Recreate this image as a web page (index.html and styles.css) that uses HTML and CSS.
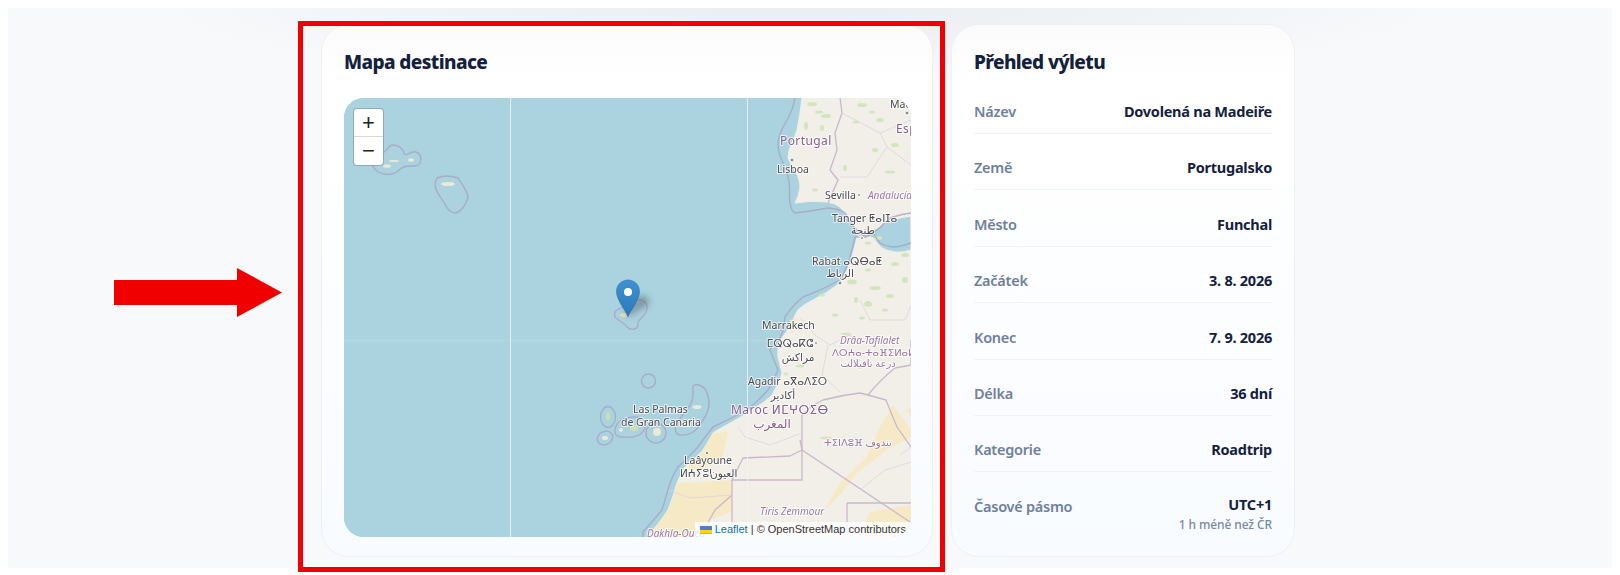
FILE: index.html
```html
<!DOCTYPE html>
<html lang="cs">
<head>
<meta charset="utf-8">
<title>Mapa destinace</title>
<link rel="stylesheet" href="styles.css">
</head>
<body>
<main class="page">
  <div class="layout">
    <section class="card">
      <h2 class="card-title">Mapa destinace</h2>
      <div class="map">
        <svg class="map-art" viewBox="344 98 567 439" width="567" height="439" xmlns="http://www.w3.org/2000/svg" aria-label="Mapa">
          <rect class="sea" x="344" y="98" width="567" height="439"/>
          <path class="land" d="M802,98 Q800,115 797,130 Q795,136 793,140 Q788,150 788,158 Q791,165 795,170 Q800,180 800,187 Q799,196 795,203 Q810,200 827,202 Q835,203 840,207 Q847,216 852,224 Q859,231 866,232 Q872,231 877,228 Q885,222 893,220 Q902,217 911,216 L911,250 Q902,253 895,252 Q887,251 882,248 Q877,243 873,238 Q868,235 863,235 Q859,235 857,237 Q854,250 850,263 Q846,274 840,283 Q827,293 813,300 Q804,304 798,310 Q794,316 792,323 Q787,332 780,340 Q777,349 778,357 Q780,365 782,373 Q778,385 772,395 Q764,403 755,408 Q740,418 723,427 Q717,430 713,433 Q708,442 703,450 Q695,459 685,467 Q680,475 677,483 Q673,497 668,510 Q661,521 653,530 L647,537 L911,537 L911,98 Z"/>

          <g class="sand">
            <path d="M713,433 L728,432 722,458 700,470 685,468 703,450 Z"/>
            <path d="M678,483 L733,480 731,512 710,520 697,537 648,537 653,530 668,510 Z"/>
            <path d="M893,405 L911,430 911,437 887,450 857,473 840,495 823,512 840,483 867,457 880,427 Z"/>
            <path d="M870,512 L911,505 911,537 860,537 Z"/>
            <path d="M905,410 L911,408 911,416 Z"/>
            <path d="M792,333 L797,322 798,318 790,320 Z"/>
          </g>

          <g class="green">
            <ellipse cx="812" cy="104" rx="5" ry="2"/><ellipse cx="819" cy="112" rx="4" ry="1.500"/>
            <ellipse cx="806" cy="126" rx="2" ry="4"/><ellipse cx="826" cy="116" rx="5" ry="2"/>
            <ellipse cx="822" cy="128" rx="2" ry="3"/><ellipse cx="812" cy="140" rx="3" ry="1.500"/>
            <ellipse cx="862" cy="105" rx="5" ry="2"/><ellipse cx="872" cy="112" rx="3" ry="1.500"/>
            <ellipse cx="880" cy="120" rx="4" ry="2"/><ellipse cx="856" cy="122" rx="3" ry="1.500"/>
            <ellipse cx="895" cy="145" rx="4" ry="2"/><ellipse cx="875" cy="150" rx="3" ry="2"/>
            <ellipse cx="815" cy="190" rx="3" ry="1.500"/><ellipse cx="845" cy="168" rx="2" ry="3"/>
            <ellipse cx="890" cy="172" rx="5" ry="1.500"/><ellipse cx="878" cy="238" rx="4" ry="2"/>
            <ellipse cx="868" cy="243" rx="3" ry="1.500"/><ellipse cx="905" cy="255" rx="4" ry="2"/>
            <ellipse cx="895" cy="264" rx="4" ry="2"/><ellipse cx="905" cy="280" rx="3" ry="3"/>
            <ellipse cx="868" cy="270" rx="3" ry="1.500"/><ellipse cx="852" cy="282" rx="5" ry="2.500"/>
            <ellipse cx="875" cy="288" rx="6" ry="2"/><ellipse cx="868" cy="304" rx="4" ry="3"/>
            <ellipse cx="890" cy="296" rx="4" ry="2"/><ellipse cx="862" cy="318" rx="3" ry="1.500"/>
            <ellipse cx="835" cy="315" rx="3" ry="1.500"/><ellipse cx="846" cy="334" rx="5" ry="1.500"/>
            <ellipse cx="800" cy="366" rx="4" ry="1.500"/><ellipse cx="826" cy="438" rx="6" ry="1.500"/>
            <ellipse cx="856" cy="300" rx="2" ry="3"/><ellipse cx="786" cy="374" rx="2" ry="1.500"/>
            <ellipse cx="885" cy="310" rx="3" ry="1.500"/><ellipse cx="822" cy="295" rx="3" ry="1.500"/>
          </g>

          <g class="border">
            <path d="M840,98 L842,113 835,133 837,150 830,170 838,180 828,203"/>
            <path class="thin" d="M842,113 L880,133 887,147 867,177 840,177"/>
            <path class="thin" d="M880,133 L911,120"/>
            <path class="thin" d="M887,147 L911,165"/>
            <path class="thin" d="M860,300 L870,320 905,320 911,305"/>
            <path class="thin" d="M800,318 L815,335 830,345 850,335 860,345"/>
            <path d="M802,415 L802,480 L732,480 L743,458 L790,456 L802,450"/>
            <path d="M800,440 L802,450 L910,522"/>
            <path d="M732,480 L732,537"/>
            <path d="M802,415 Q812,405 823,400 Q842,395 860,393 L868,395 Q880,380 895,368 L911,365 L911,340"/>
            <path d="M868,395 L886,400 Q892,415 897,427 L911,447"/>
            <path d="M847,503 L911,503"/>
            <path d="M847,503 L847,537"/>
            <path d="M732,495 L715,510 700,537"/>
            <path class="thin" d="M668,490 L690,498 732,495"/>
            <path class="thin" d="M738,427 L745,437 770,445 802,433"/>
            <path class="thin" d="M828,345 L822,375 840,392"/>
            <path class="thin" d="M900,455 L911,447"/>
            <path class="thin" d="M860,490 L885,470 911,462"/>
          </g>

          <g class="maritime">
            <path d="M795,98 Q793,110 786,122 Q778,135 778,144 Q778,153 784,165 Q790,177 789.500,193 Q789,210 795,213 Q812,211 828,208 Q840,209 845,213 Q850,220 853,226 Q860,236 866,236 Q874,233 880,228 Q886,220 893,217 Q902,214 911,213"/>
            <path d="M911,243 Q900,247 893,247 Q885,246 880,243 Q876,238 873,232 Q870,236 866,237 L855,237 Q853,247 850,257 Q846,270 840,280 Q822,290 803,297 Q792,306 785,317 Q784,324 783,330 Q781,338 777,343 Q772,346 770,350 Q774,360 778,370 Q774,380 768,390 Q758,401 747,410 Q730,419 713,427 Q705,437 697,448 Q688,458 678,467 Q673,475 670,483 Q666,497 662,510 Q652,522 643,532 L643,538"/>
            <path d="M372,165 C368,156 384,156 388,148 C392,142 402,146 404,153 C406,158 410,150 416,152 C423,154 422,166 415,166 C406,166 402,166 397,172 C390,176 378,176 372,165 Z"/>
            <path d="M437,178 C444,175 452,176 458,178 C462,184 468,192 468,197 C466,204 462,211 456,213 C450,213 447,209 445,204 C441,198 434,190 435,183 Z"/>
            <path d="M615,312 C618,306 630,308 636,301 C642,297 648,303 647,309 C646,316 640,318 638,322 C639,330 631,331 627,327 C624,321 612,320 615,312 Z"/>
            <path d="M693,386 C697,383 705,386 707,393 C710,400 710,410 703,420 C698,430 690,436 680,435 C675,434 674,428 677,423 C684,412 693,405 693,396 Z"/>
            <circle cx="656" cy="433" r="10"/>
            <path d="M615,430 C616,420 626,417 635,417 C645,417 647,424 644,430 C640,437 630,438 622,437 C617,437 614,434 615,430 Z"/>
            <ellipse cx="608" cy="417" rx="7.500" ry="10.500"/>
            <ellipse cx="605" cy="438" rx="8" ry="6.500" transform="rotate(-25 605 438)"/>
            <ellipse cx="648.500" cy="381" rx="7" ry="7"/>
          </g>

          <g class="isle">
            <ellipse cx="387" cy="166" rx="4" ry="1.800"/><ellipse cx="394" cy="161" rx="5" ry="1"/>
            <ellipse cx="411" cy="160" rx="3" ry="1.800"/><ellipse cx="394" cy="151" rx="2" ry="1.500" class="faint"/>
            <ellipse cx="448" cy="184" rx="7" ry="2"/><ellipse cx="456" cy="207" rx="2" ry="1.500" class="faint"/>
            <ellipse cx="625" cy="315" rx="5" ry="2" class="tan"/>
            <ellipse cx="697" cy="407" rx="4.500" ry="2"/><ellipse cx="686" cy="425" rx="5" ry="2"/>
            <circle cx="657" cy="432" r="4"/><ellipse cx="634" cy="428" rx="4" ry="3" class="greenish"/>
            <ellipse cx="608" cy="416" rx="2" ry="4" class="greenish"/><ellipse cx="605" cy="438" rx="3" ry="2"/>
            <circle cx="621" cy="430" r="2"/>
          </g>

          <line class="seam" x1="510.500" y1="98" x2="510.500" y2="537"/>
          <line class="seam" x1="747.500" y1="98" x2="747.500" y2="537"/>
          <line class="seam faint-seam" x1="344" y1="340.500" x2="911" y2="340.500"/>

          <g class="dots">
            <circle cx="907" cy="113" r="2"/><circle cx="792" cy="160" r="2"/><circle cx="859" cy="195" r="1.500"/>
            <circle cx="862" cy="238" r="1.500"/><circle cx="840" cy="283" r="2"/><circle cx="816" cy="343" r="1.500"/>
            <circle cx="707" cy="453" r="1.800"/>
          </g>

          <g class="place">
            <text x="890" y="108">Madrid</text>
            <text x="777" y="173">Lisboa</text>
            <text x="825" y="199">Sevilla</text>
            <text x="832" y="222">Tanger ⵟⴰⵏⵊⴰ</text>
            <text x="863" y="234" class="mid">طنجة</text>
            <text x="812" y="265">Rabat ⴰⵕⴱⴰⵟ</text>
            <text x="840" y="277" class="mid">الرباط</text>
            <text x="762" y="329">Marrakech</text>
            <text x="790" y="347" class="mid">ⵎⵕⵕⴰⴽⵛ</text>
            <text x="798" y="361" class="mid">مراكش</text>
            <text x="748" y="385">Agadir ⴰⴳⴰⴷⵉⵔ</text>
            <text x="783" y="399" class="mid">أكادير</text>
            <text x="633" y="413">Las Palmas</text>
            <text x="621" y="426">de Gran Canaria</text>
            <text x="684" y="464">Laâyoune</text>
            <text x="680" y="477">ⵍⵄⵢⵓⵏ</text>
            <text x="710" y="477">العيون</text>
          </g>

          <g class="country">
            <text x="780" y="145">Portugal</text>
            <text x="896" y="133">España</text>
            <text x="731" y="414">Maroc ⵍⵎⵖⵔⵉⴱ</text>
            <text x="772" y="428" class="mid">المغرب</text>
          </g>

          <g class="region">
            <text x="868" y="199" class="it">Andalucía</text>
            <text x="840" y="344" class="it">Drâa-Tafilalet</text>
            <text x="832" y="356">ⴷⵔⵄⴰ-ⵜⴰⴼⵉⵍⴰⵍⵜ</text>
            <text x="868" y="367" class="mid">درعة تافيلالت</text>
            <text x="824" y="446">ⵜⵉⵏⴷⵓⴼ تندوف</text>
            <text x="760" y="515" class="it">Tiris Zemmour</text>
            <text x="647" y="537" class="it">Dakhla-Oued</text>
          </g>

          <path class="pin-shadow" d="M628,317 L648,305 C652,299 645,294 638,296 L624,306 Z"/>
          <defs>
            <linearGradient id="pinfill" x1="0" y1="0" x2="0" y2="1">
              <stop offset="0" stop-color="#3f92d2"/>
              <stop offset="1" stop-color="#2a78bb"/>
            </linearGradient>
          </defs>
          <path class="pin" d="M628,317 C625,309 616.500,300 616.500,291.500 C616.500,285 621.500,280 628,280 C634.500,280 639.500,285 639.500,291.500 C639.500,300 631,309 628,317 Z" fill="url(#pinfill)"/>
          <circle class="pin-hole" cx="628" cy="292" r="4"/>
        </svg>

        <div class="zoom-control">
          <span class="zoom-btn zoom-in">+</span>
          <span class="zoom-btn">−</span>
        </div>

        <div class="attribution"><svg class="flag" width="12" height="8" viewBox="0 0 12 8" xmlns="http://www.w3.org/2000/svg"><rect width="12" height="4" fill="#4C7BE1"/><rect y="4" width="12" height="3" fill="#FFD500"/><rect y="7" width="12" height="1" fill="#E0BC00"/></svg><a class="attr-link">Leaflet</a> | © OpenStreetMap contributors</div>
      </div>
    </section>

    <aside class="card summary">
      <h2 class="card-title">Přehled výletu</h2>
      <dl class="rows">
        <div class="row"><dt>Název</dt><dd>Dovolená na Madeiře</dd></div>
        <div class="row"><dt>Země</dt><dd>Portugalsko</dd></div>
        <div class="row"><dt>Město</dt><dd>Funchal</dd></div>
        <div class="row"><dt>Začátek</dt><dd>3. 8. 2026</dd></div>
        <div class="row"><dt>Konec</dt><dd>7. 9. 2026</dd></div>
        <div class="row"><dt>Délka</dt><dd>36 dní</dd></div>
        <div class="row"><dt>Kategorie</dt><dd>Roadtrip</dd></div>
        <div class="row row-last"><dt>Časové pásmo</dt><dd class="stacked">UTC+1<small class="note">1 h méně než ČR</small></dd></div>
      </dl>
    </aside>
  </div>
</main>

<div class="highlight-frame"></div>
<svg class="highlight-arrow" width="168" height="49" viewBox="0 0 168 49" xmlns="http://www.w3.org/2000/svg"><path d="M0,12 H123 V0 L168,24.500 L123,49 V37 H0 Z"/></svg>
</body>
</html>
```
FILE: styles.css
```css
* { box-sizing: border-box; }

html, body { background: #fff; overflow: hidden; }

body {
  margin: 8px 8px 0;
  height: 567px;
  font-family: "Noto Sans", "DejaVu Sans", sans-serif;
  color: #14213d;
}

.page {
  height: 560px;
  padding: 16px 0 0 313px;
  background:
    radial-gradient(ellipse 640px 72px at 792px 0, #ecedf2 0%, rgba(236, 237, 242, 0.55) 55%, rgba(248, 249, 251, 0) 100%),
    #f8f9fb;
}

.layout {
  display: flex;
  gap: 18px;
  align-items: stretch;
  height: 533px;
}

.card {
  width: 612px;
  padding: 22px;
  border: 1px solid #eef0f6;
  border-radius: 28px;
  background: linear-gradient(180deg, #fbfbfc 0, #fff 50px, #fff 20%, #f8fbff 100%);
}

.summary { width: 344px; }

.card-title {
  margin: 0 0 21px;
  font-size: 19px;
  line-height: 30px;
  font-weight: 800;
  letter-spacing: -0.6px;
  color: #14213d;
}

/* Map */
.map {
  position: relative;
  width: 567px;
  height: 439px;
  border-radius: 20px;
  overflow: hidden;
  background: #aad3df;
}

.map-art { display: block; filter: blur(0.4px); }

.sea { fill: #aad2df; }
.land { fill: #f2efe9; stroke: #f2efe9; stroke-width: 1; stroke-linejoin: round; }
.sand { fill: #f6e9c6; }
.green { fill: #d3e5bd; }

.border { fill: none; stroke: #c9b8cb; stroke-width: 1.300; stroke-linejoin: round; }
.border .thin { stroke: #dcd2dc; stroke-width: 0.800; }

.maritime { fill: none; stroke: #a8a4c2; stroke-width: 1.400; stroke-linejoin: round; opacity: 0.8; }

.isle { fill: #ece9d5; }
.isle .faint { fill: #c9c4d0; }
.isle .tan { fill: #e8dfb0; }
.isle .greenish { fill: #cfe0ae; }

.seam { stroke: #eef6f8; stroke-width: 1; opacity: 0.85; }
.faint-seam { opacity: 0.12; }

.dots circle { fill: #8a8a8a; stroke: #fff; stroke-width: 1; }

.place text, .country text, .region text {
  font-family: "Noto Sans", "DejaVu Sans", sans-serif;
  paint-order: stroke;
  stroke: rgba(255, 255, 255, 0.75);
  stroke-width: 2;
  stroke-linejoin: round;
}

.place text { font-size: 10.500px; fill: #4a4a50; }
.country text { font-size: 12px; letter-spacing: 0.4px; fill: #85608c; }
.region text { font-size: 10px; fill: #9a789f; }

.mid { text-anchor: middle; }
.it { font-style: italic; }

.pin { stroke: #2467a3; stroke-width: 0.500; }
.pin-hole { fill: #fff; }
.pin-shadow { fill: rgba(40, 40, 50, 0.32); filter: blur(3px); }

.zoom-control {
  position: absolute;
  left: 10px;
  top: 11px;
  display: flex;
  flex-direction: column;
  width: 29px;
  height: 56px;
  background: #fff;
  border-radius: 3px;
  box-shadow: 0 0 0 1px rgba(90, 100, 110, 0.35);
}

.zoom-btn {
  display: flex;
  align-items: center;
  justify-content: center;
  height: 28px;
  font-family: "Liberation Sans", sans-serif;
  font-size: 22px;
  font-weight: 400;
  color: #222;
}

.zoom-in { border-bottom: 1px solid #d8d8d8; }

.attribution {
  position: absolute;
  right: 0;
  bottom: 0;
  height: 15px;
  padding: 0 5px;
  white-space: nowrap;
  font-family: "Liberation Sans", sans-serif;
  font-size: 11px;
  line-height: 15px;
  color: #333;
  background: rgba(255, 255, 255, 0.8);
}

.flag { margin-right: 3px; vertical-align: -1px; }
.attr-link { color: #0078a8; }

/* Summary list */
.rows {
  margin: 23px 0 0;
  display: flex;
  flex-direction: column;
  gap: 22.400px;
}

.row {
  display: flex;
  justify-content: space-between;
  align-items: flex-start;
  height: 34px;
  padding-bottom: 11px;
  border-bottom: 1px solid #f0f2f7;
  font-size: 14.500px;
  line-height: 22.500px;
  letter-spacing: -0.25px;
}

.row-last { border-bottom: 0; height: auto; padding-bottom: 0; }

.row dt { font-weight: 600; color: #6f7f9d; }

.row dd {
  margin: 0;
  font-weight: 700;
  color: #14213d;
  text-align: right;
}

.row .stacked { margin-top: -2px; }

.note {
  display: block;
  font-size: 12px;
  line-height: 20px;
  font-weight: 500;
  letter-spacing: -0.1px;
  color: #7a88a3;
}

/* Annotation overlay */
.highlight-frame {
  position: absolute;
  left: 298px;
  top: 21px;
  width: 647px;
  height: 551px;
  border: 5px solid #f00000;
}

.highlight-arrow {
  position: absolute;
  left: 114px;
  top: 268px;
  fill: #f00000;
}
```
